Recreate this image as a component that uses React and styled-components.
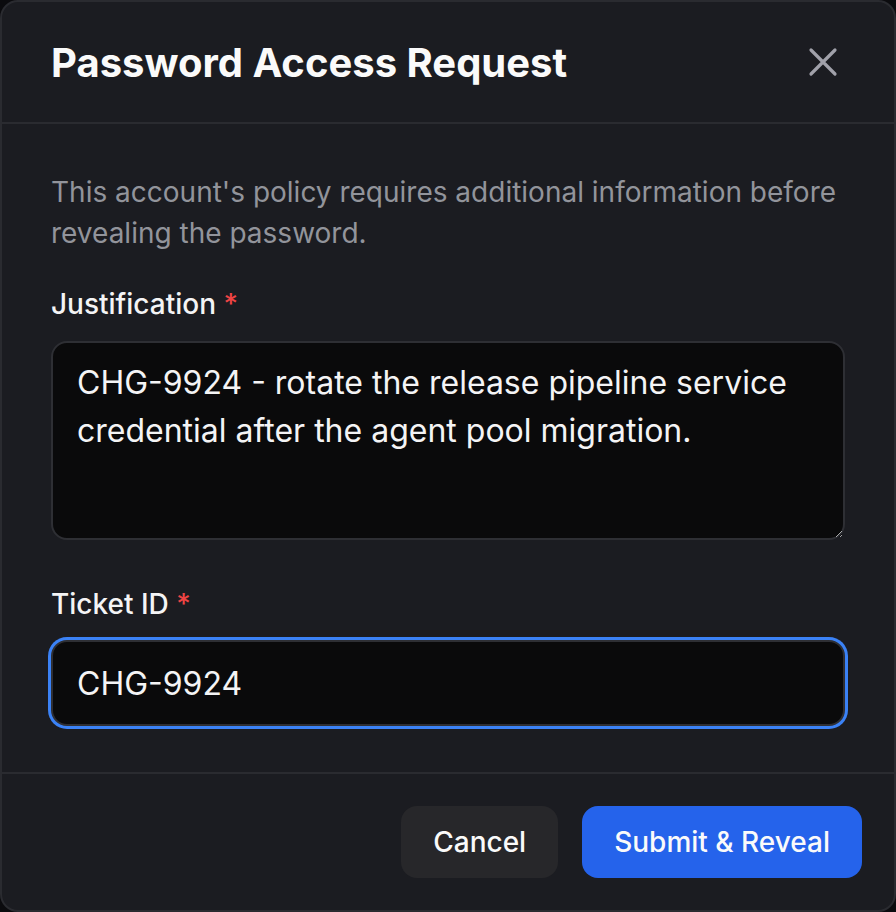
import React from "react";
import styled, { createGlobalStyle } from "styled-components";

const GlobalStyle = createGlobalStyle`
  html, body {
    margin: 0;
    padding: 0;
    background: #0b0b0e;
  }
  * {
    box-sizing: border-box;
  }
`;

const App = () => {
  return (
    <>
      <GlobalStyle />
      <Dialog>
        <Header>
          <Title>Password Access Request</Title>
          <CloseButton aria-label="Close">
            <svg width="32" height="32" viewBox="0 0 32 32" fill="none">
              <path
                d="M4 4L28 28M28 4L4 28"
                stroke="#a1a1aa"
                strokeWidth="3.2"
                strokeLinecap="round"
              />
            </svg>
          </CloseButton>
        </Header>
        <Body>
          <Description>
            This account's policy requires additional information before
            revealing the password.
          </Description>
          <Fields>
            <Field>
              <Label>
                Justification <Required>*</Required>
              </Label>
              <TextArea
                defaultValue="CHG-9924 - rotate the release pipeline service credential after the agent pool migration."
              />
            </Field>
            <Field>
              <Label>
                Ticket ID <Required>*</Required>
              </Label>
              <Input defaultValue="CHG-9924" focused />
            </Field>
          </Fields>
        </Body>
        <Footer>
          <Button>Cancel</Button>
          <Button primary>Submit &amp; Reveal</Button>
        </Footer>
      </Dialog>
    </>
  );
};
export default App;

const Dialog = styled.div`
  width: 896px;
  height: 912px;
  display: flex;
  flex-direction: column;
  background: #1b1c21;
  border: 2px solid #2a2b30;
  border-radius: 18px;
  font-family: Inter, "Noto Sans", sans-serif;
  color: #f4f4f5;
  overflow: hidden;
`;

const Header = styled.div`
  display: flex;
  align-items: center;
  justify-content: space-between;
  height: 122px;
  padding: 0 55px 0 49px;
  border-bottom: 2px solid #2a2b30;
`;

const Title = styled.h2`
  margin: 0;
  font-size: 40px;
  font-weight: 700;
  color: #fafafa;
`;

const CloseButton = styled.button`
  display: flex;
  align-items: center;
  justify-content: center;
  padding: 0;
  background: none;
  border: none;
  cursor: pointer;
`;

const Body = styled.div`
  flex: 1;
  display: flex;
  flex-direction: column;
  gap: 33px;
  padding: 48px 49px 0;
`;

const Description = styled.p`
  margin: 0;
  font-size: 28px;
  line-height: 41px;
  color: #92949b;
`;

const Fields = styled.div`
  display: flex;
  flex-direction: column;
  gap: 47px;
`;

const Field = styled.div`
  display: flex;
  flex-direction: column;
  gap: 20px;
`;

const Label = styled.label`
  font-size: 28px;
  font-weight: 500;
  line-height: 34px;
  color: #f4f4f5;
`;

const Required = styled.span`
  color: #ef4444;
`;

const fieldBase = `
  width: 100%;
  background: #0a0a0b;
  border: 2px solid #2e2f34;
  border-radius: 16px;
  color: #f4f4f5;
  font-family: Inter, "Noto Sans", sans-serif;
  font-size: 32px;
  outline: none;
`;

const TextArea = styled.textarea`
  ${fieldBase}
  height: 199px;
  padding: 16px 24px;
  line-height: 48px;
  resize: vertical;
`;

const Input = styled.input`
  ${fieldBase}
  height: 86px;
  margin-top: -1px;
  padding: 0 24px;
  box-shadow: ${({ focused }) => (focused ? "0 0 0 3px #3b82f6" : "none")};
`;

const Footer = styled.div`
  display: flex;
  justify-content: flex-end;
  align-items: center;
  gap: 24px;
  height: 138px;
  padding: 0 32px 0 0;
  border-top: 2px solid #2a2b30;
`;

const Button = styled.button`
  height: 72px;
  padding: 0 32px;
  border: none;
  border-radius: 16px;
  font-family: Inter, "Noto Sans", sans-serif;
  font-size: 28px;
  font-weight: 500;
  color: #fafafa;
  background: ${({ primary }) => (primary ? "#2563eb" : "#27272a")};
  cursor: pointer;
`;
